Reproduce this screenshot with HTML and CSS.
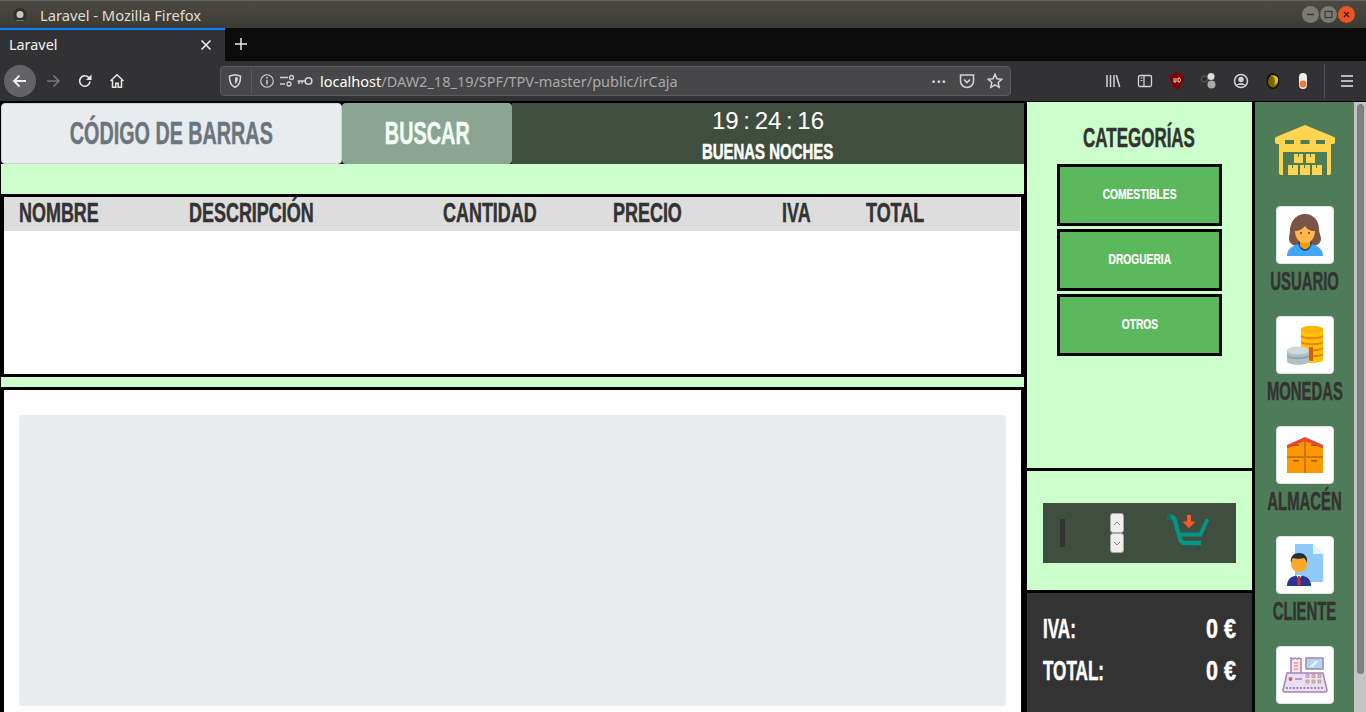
FILE: index.html
```html
<!DOCTYPE html>
<html lang="es">
<head>
  <meta charset="UTF-8" />
  <title>Laravel</title>
  <link rel="stylesheet" href="styles.css">
</head>
<body>
  <div class="titlebar">
    <svg class="app-dot" width="16" height="16" viewBox="0 0 16 16"><circle cx="8" cy="8" r="7" fill="#33322e"/><circle cx="8" cy="7.500" r="3.500" fill="#c9c7c0"/><path d="M4 13h8v1H4z" fill="#77756d"/></svg>
    <span class="title-text">Laravel - Mozilla Firefox</span>
    <div class="win-btns">
      <span class="win-btn"><svg width="17" height="17" viewBox="0 0 17 17"><path d="M5 8.500h7" stroke="#3a3934" stroke-width="1.500"/></svg></span>
      <span class="win-btn"><svg width="17" height="17" viewBox="0 0 17 17"><rect x="5" y="5.500" width="7" height="6" fill="none" stroke="#3a3934" stroke-width="1.200"/></svg></span>
      <span class="win-btn close"><svg width="17" height="17" viewBox="0 0 17 17"><path d="M6 6l5 5M11 6l-5 5" stroke="#4a2010" stroke-width="1.400"/></svg></span>
    </div>
  </div>

  <div class="tabbar">
    <div class="tab">
      <span>Laravel</span>
      <svg width="12" height="12" viewBox="0 0 12 12"><path d="M1.500 1.500l9 9M10.500 1.500l-9 9" stroke="#f2f2f2" stroke-width="1.500"/></svg>
    </div>
    <svg class="new-tab" width="14" height="14" viewBox="0 0 14 14"><path d="M7 1v12M1 7h12" stroke="#e8e8e8" stroke-width="1.500"/></svg>
  </div>

  <div class="toolbar">
    <span class="back"><svg width="16" height="16" viewBox="0 0 16 16"><path d="M14 8H2M7.500 2.500L2 8l5.500 5.500" fill="none" stroke="#f2f2f2" stroke-width="1.800"/></svg></span>
    <svg class="tool-fwd" width="16" height="16" viewBox="0 0 16 16"><path d="M2 8h12M8.500 2.500L14 8l-5.500 5.500" fill="none" stroke="#77777a" stroke-width="1.600"/></svg>
    <svg class="tool-reload" width="16" height="16" viewBox="0 0 16 16"><path d="M13 8.500A5.200 5.200 0 1 1 11.500 4.300L14 6.500" fill="none" stroke="#e8e8e8" stroke-width="1.600"/><path d="M14.500 1.500v5.500H9z" fill="#e8e8e8"/></svg>
    <svg class="tool-home" width="16" height="16" viewBox="0 0 16 16"><path d="M1.500 8L8 1.800 14.500 8M3.500 7v7.200h3.300v-4h2.400v4h3.300V7" fill="none" stroke="#e8e8e8" stroke-width="1.500"/></svg>

    <div class="urlbar">
      <svg class="url-shield" width="14" height="14" viewBox="0 0 14 14"><path d="M1.500 2L7 .8 12.500 2c.2 5-1.500 9.500-5.500 11.500C3 11.500 1.300 7 1.500 2z" fill="none" stroke="#d4d4d6" stroke-width="1.500"/><path d="M7 3l3 .7c0 3-1 5-3 6.500z" fill="#d4d4d6"/></svg>
      <span class="url-sep"></span>
      <svg width="16" height="16" viewBox="0 0 16 16"><circle cx="8" cy="8" r="6.300" fill="none" stroke="#d4d4d6" stroke-width="1.100"/><path d="M8 7v4.500" stroke="#d4d4d6" stroke-width="1.400"/><circle cx="8" cy="4.800" r=".9" fill="#d4d4d6"/></svg>
      <svg class="url-perm" width="16" height="16" viewBox="0 0 16 16"><path d="M1 4.500h8M1 11h5" stroke="#d4d4d6" stroke-width="1.600"/><circle cx="12.500" cy="4.500" r="2" fill="none" stroke="#d4d4d6" stroke-width="1.300"/><circle cx="10" cy="11" r="2" fill="none" stroke="#d4d4d6" stroke-width="1.300"/></svg>
      <svg class="url-key" width="16" height="10" viewBox="0 0 16 10"><circle cx="11.500" cy="5" r="3.300" fill="none" stroke="#d4d4d6" stroke-width="1.600"/><path d="M8 5H.500M2 5v3M5 5v2.500" stroke="#d4d4d6" stroke-width="1.500"/></svg>
      <span class="url-text"><b>localhost</b>/DAW2_18_19/SPF/TPV-master/public/irCaja</span>
      <span class="url-dots">•••</span>
      <svg class="url-pocket" width="16" height="16" viewBox="0 0 16 16"><path d="M1.500 2h13v6a6.500 6.500 0 0 1-13 0z" fill="none" stroke="#d4d4d6" stroke-width="1.500"/><path d="M5 6.500l3 3 3-3" fill="none" stroke="#d4d4d6" stroke-width="1.600"/></svg>
      <svg width="16" height="16" viewBox="0 0 16 16"><path d="M8 1.300l2 4.500 4.800.5-3.600 3.200 1 4.800L8 11.900l-4.200 2.400 1-4.800L1.200 6.300 6 5.800z" fill="none" stroke="#d4d4d6" stroke-width="1.500"/></svg>
    </div>

    <div class="tool-right">
      <svg width="16" height="16" viewBox="0 0 16 16"><path d="M2 2v12M5.500 2v12M9 2v12M11.300 2l3.400 12" stroke="#d4d4d6" stroke-width="1.500"/></svg>
      <svg width="16" height="16" viewBox="0 0 16 16"><rect x="1.500" y="2.500" width="13" height="11" rx="1.500" fill="none" stroke="#d4d4d6" stroke-width="1.300"/><path d="M7 2.500v11" stroke="#d4d4d6" stroke-width="1.300"/><path d="M3.500 5h2M3.500 7.500h2" stroke="#d4d4d6"/></svg>
      <svg width="16" height="18" viewBox="0 0 16 18"><path d="M8 .5l7 2.500c.2 6.500-2 11.500-7 14.500C3 14.500.8 9.500 1 3z" fill="#800000"/><path d="M5 6v4h2V6M9 6v4c2 0 2.500-.8 2.500-2S11 6 9 6z" fill="none" stroke="#f4dcdc"/></svg>
      <svg width="16" height="18" viewBox="0 0 16 18"><circle cx="10" cy="4.500" r="3.500" fill="#dcdcdc"/><circle cx="3.500" cy="7" r="3" fill="#2c2c2c" stroke="#999" stroke-width=".5"/><circle cx="10.500" cy="12.500" r="4" fill="#a9a9a9"/></svg>
      <svg width="16" height="16" viewBox="0 0 16 16"><circle cx="8" cy="8" r="6.500" fill="none" stroke="#d4d4d6" stroke-width="1.500"/><circle cx="8" cy="6.500" r="2.700" fill="#d4d4d6"/><path d="M3.500 12c1.500-2.400 7.500-2.400 9 0" fill="#d4d4d6"/></svg>
      <svg width="16" height="18" viewBox="0 0 16 18"><ellipse cx="8" cy="9" rx="6.500" ry="8" fill="#111"/><ellipse cx="8" cy="9.500" rx="5" ry="6" fill="#7a6400"/><path d="M4.500 4c4-1 7 3 4.500 9 4-1 5-5 3.500-7.500C11 3.500 7 2.500 4.500 4z" fill="#e8c400"/></svg>
      <svg width="12" height="18" viewBox="0 0 12 18"><rect x="2" y="1" width="8" height="16" rx="4" fill="#ececec"/><circle cx="6" cy="12" r="3.400" fill="#f0763a"/></svg>
    </div>
    <span class="tool-sep"></span>
    <svg class="tool-menu" width="14" height="14" viewBox="0 0 14 14"><path d="M1 2h12M1 7h12M1 12h12" stroke="#e8e8e8" stroke-width="1.700"/></svg>
  </div>

  <div class="page">
    <div class="main-col">
      <div class="top-row">
        <div class="barcode"><span>CÓDIGO DE BARRAS</span></div>
        <div class="search-btn"><span>BUSCAR</span></div>
        <div class="clock">
          <div class="clock-time">19 : 24 : 16</div>
          <div class="clock-greet"><span>BUENAS NOCHES</span></div>
        </div>
      </div>
      <div class="strip-big"></div>
      <div class="ticket">
        <div class="ticket-head">
          <div><span>NOMBRE</span></div>
          <div><span>DESCRIPCIÓN</span></div>
          <div><span>CANTIDAD</span></div>
          <div><span>PRECIO</span></div>
          <div><span>IVA</span></div>
          <div><span>TOTAL</span></div>
        </div>
      </div>
      <div class="strip-small"></div>
      <div class="products">
        <div class="products-box"></div>
      </div>
    </div>

    <div class="side-col">
      <div class="categories">
        <h2><span>CATEGORÍAS</span></h2>
        <div class="cat-btn"><span>COMESTIBLES</span></div>
        <div class="cat-btn"><span>DROGUERIA</span></div>
        <div class="cat-btn"><span>OTROS</span></div>
      </div>
      <div class="qty-area">
        <div class="qty-panel">
          <span class="qty-input"></span>
          <div class="spinner">
            <span><svg width="8" height="5" viewBox="0 0 8 5"><path d="M1 4l3-3 3 3" fill="none" stroke="#888" stroke-width="1"/></svg></span>
            <span><svg width="8" height="5" viewBox="0 0 8 5"><path d="M1 1l3 3 3-3" fill="none" stroke="#888" stroke-width="1"/></svg></span>
          </div>
          <svg class="cart" width="42" height="38" viewBox="0 0 42 38">
            <path d="M1 3h3.500c1.500 0 2.500 1 3 2.500l5.500 19c.7 2.500 2 4.500 4.500 4.500H34" fill="none" stroke="#009688" stroke-width="4.400"/>
            <path d="M10 20.500h23.500L40.500 5" fill="none" stroke="#009688" stroke-width="4"/>
            <path d="M0 1h4v4.500H0z" fill="#00796b"/>
            <path d="M20 1h4v6.500h4.500L22 14 15.500 7.500H20z" fill="#ff5722"/>
            <circle cx="16" cy="34.500" r="2" fill="#37474f"/><circle cx="31" cy="34.500" r="2" fill="#37474f"/>
          </svg>
        </div>
      </div>
      <div class="totals">
        <div class="total-row"><span class="total-label">IVA:</span><span class="total-value">0 €</span></div>
        <div class="total-row"><span class="total-label">TOTAL:</span><span class="total-value">0 €</span></div>
      </div>
    </div>

    <div class="nav-col">
      <svg class="warehouse" width="60" height="50" viewBox="0 0 60 50">
        <path d="M30 0L59 12c1 .5 1 1 1 2v3c0 1-.5 2-2 2h-2v29c0 1.200-.8 2-2 2h-2V27H8v23H6c-1.200 0-2-.8-2-2V19H2c-1.500 0-2-1-2-2v-3c0-1 0-1.500 1-2z" fill="#ffd54f"/>
        <path d="M10 15h9v4h-9zM25.500 15h9v4h-9zM41 15h9v4h-9z" fill="#4f7c58"/>
        <path d="M19 29h4v3h1v-3h4v9h-9zM31 29h4v3h1v-3h4v9h-9zM13 40h4v3h1v-3h5v10H13zM25 40h4v3h1v-3h5v10H25zM37 40h4v3h1v-3h5v10H37z" fill="#ffd54f"/>
      </svg>

      <div class="nav-item">
        <div class="nav-tile">
          <svg width="36" height="42" viewBox="0 0 36 42">
            <path d="M18 0c9 0 14 7 14 15 0 4 2 7 2 10 0 4-4 7-8 7H10c-4 0-8-3-8-7 0-3 1-6 1-10C4 7 9 0 18 0z" fill="#795548"/>
            <path d="M0 42c0-7 5-10 12-12h12c7 2 12 5 12 12z" fill="#42a5f5"/>
            <path d="M11 28c0 5 4 9 7 9s7-4 7-9z" fill="#01579b"/>
            <path d="M13 27h10v4c0 2-3 4-5 4s-5-2-5-4z" fill="#ff9800"/>
            <path d="M8 17c3 0 8-2 10-5 2 3 5 5 10 5 0 7-4 12-10 12S8 24 8 17z" fill="#ffb74d"/>
            <circle cx="14" cy="19" r="1" fill="#5d4037"/><circle cx="22" cy="19" r="1" fill="#5d4037"/>
          </svg>
        </div>
        <span>USUARIO</span>
      </div>

      <div class="nav-item">
        <div class="nav-tile">
          <svg width="36" height="39" viewBox="0 0 36 39">
            <path d="M14 3c0-4 22-4 22 0v31c0 4-22 4-22 0z" fill="#ffc107"/>
            <ellipse cx="25" cy="3.500" rx="11" ry="3.500" fill="#ffb300"/>
            <path d="M14 9c3 3 19 3 22 0v2c-3 3-19 3-22 0zM14 15c3 3 19 3 22 0v2c-3 3-19 3-22 0zM14 21c3 3 19 3 22 0v2c-3 3-19 3-22 0zM14 27c3 3 19 3 22 0v2c-3 3-19 3-22 0z" fill="#f57c00"/>
            <path d="M22 21h4v14l-4-.5z" fill="#d06000"/>
            <path d="M0 25c0-5 22-5 22 0v10c0 5-22 5-22 0z" fill="#b0bec5"/>
            <ellipse cx="11" cy="24.500" rx="11" ry="4" fill="#cfd8dc"/>
            <path d="M0 29c3 3 19 3 22 0v2c-3 3-19 3-22 0z" fill="#90a4ae"/>
          </svg>
        </div>
        <span>MONEDAS</span>
      </div>

      <div class="nav-item">
        <div class="nav-tile">
          <svg width="36" height="36" viewBox="0 0 36 36">
            <path d="M0 9L18 1l18 8v27H0z" fill="#ff9800"/>
            <path d="M0 8L18 0l18 8v3.500L18 4 0 11.500z" fill="#f44336"/>
            <path d="M17 4h2v32h-2zM0 19h36v2H0z" fill="#c87800"/>
            <path d="M6 7.500h6V9H6zM24 7.500h6V9h-6zM6 23h6v1.500H6zM24 23h6v1.500h-6z" fill="#8d5a00"/>
          </svg>
        </div>
        <span>ALMACÉN</span>
      </div>

      <div class="nav-item">
        <div class="nav-tile">
          <svg width="36" height="42" viewBox="0 0 36 42">
            <path d="M8 0h18l10 10v28H8z" fill="#90caf9"/>
            <path d="M26 0l10 10H26z" fill="#e3f2fd"/>
            <path d="M0 42c0-7 4-10 12-11 8 1 12 4 12 11z" fill="#283593"/>
            <path d="M9 31h6l-3 5z" fill="#fff"/><path d="M11 32h2l1 9h-4z" fill="#d32f2f"/>
            <circle cx="12" cy="20" r="8" fill="#ffa726"/>
            <path d="M4 19c-1-7 3-10 8-10s9 3 8 10c-1-3-2-4-3-5-3 1-9 1-11 0-1 1-1 3-2 5z" fill="#263238"/>
          </svg>
        </div>
        <span>CLIENTE</span>
      </div>

      <div class="nav-item">
        <div class="nav-tile">
          <svg width="46" height="38" viewBox="0 0 46 38">
            <path d="M9 2l2 1 2-1 2 1 2-1 2 1v15H9z" fill="#fbe9e7" stroke="#a283bd" stroke-width="1.500"/>
            <path d="M11.500 7h5M11.500 10h5M11.500 13h5" stroke="#e57373" stroke-width="1.200"/>
            <path d="M24 2h17v11H24z" fill="#b3d4f0" stroke="#a283bd" stroke-width="1.500"/>
            <path d="M27 11l6-6h4l-6 6z" fill="#e3f2fd"/>
            <path d="M5 17h36l4 17c0 1.500-1 2-2 2H3c-1 0-2-.5-2-2z" fill="#e8dff0" stroke="#a283bd" stroke-width="1.500"/>
            <circle cx="8.500" cy="23" r="2" fill="#d35d7a"/>
            <path d="M13 23h7" stroke="#a283bd" stroke-width="1.500"/>
            <path d="M24 18.500h3v3h-3zM30 18.500h3v3h-3zM36 18.500h3v3h-3zM24 24h3v3h-3zM30 24h3v3h-3zM36 24h3v3h-3z" fill="#e6c384" stroke="#a283bd" stroke-width=".6"/>
            <path d="M4 32h38" stroke="#a283bd" stroke-width="2" stroke-dasharray="2 1.500"/>
          </svg>
        </div>
      </div>
    </div>

    <div class="scrollbar"><span class="scroll-thumb"></span></div>
  </div>
</body>
</html>
```

FILE: styles.css
```css
* {
  box-sizing: border-box;
}

html, body {
  margin: 0;
  padding: 0;
  height: 712px;
  overflow: hidden;
}

body {
  font-family: "Noto Sans", "Open Sans", sans-serif;
  background: #000;
  color: #333;
}

svg {
  display: block;
  flex: none;
}

/* window chrome */
.titlebar {
  height: 28px;
  display: flex;
  align-items: center;
  padding: 0 11px 0 12px;
  background: linear-gradient(#4b4943, #3c3b36);
  border-top: 1px solid #66645e;
  color: #e0ddd6;
  font-size: 14.7px;
}

.title-text {
  margin-left: 12px;
}

.win-btns {
  margin-left: auto;
  display: flex;
  gap: 1px;
}

.win-btn {
  width: 17px;
  height: 17px;
  border-radius: 50%;
  background: #7b7a73;
}

.win-btn.close {
  background: #e9541f;
}

.tabbar {
  height: 33px;
  display: flex;
  align-items: center;
  background: #0c0c0d;
}

.tab {
  width: 225px;
  height: 33px;
  display: flex;
  align-items: center;
  justify-content: space-between;
  padding: 0 13px 2px 9px;
  background: #323234;
  border-top: 2px solid #0a84ff;
  color: #f2f2f2;
  font-size: 14.4px;
}

.new-tab {
  margin: 0 0 2px 9px;
}

.toolbar {
  height: 40px;
  display: flex;
  align-items: center;
  background: #323234;
  color: #fff;
}

.back {
  width: 32px;
  height: 32px;
  margin-left: 4px;
  border-radius: 50%;
  background: #636365;
  display: flex;
  align-items: center;
  justify-content: center;
}

.tool-fwd {
  margin-left: 9px;
}

.tool-reload {
  margin-left: 16px;
}

.tool-home {
  margin-left: 16px;
}

.urlbar {
  width: 791px;
  height: 30px;
  margin-left: 95px;
  display: flex;
  align-items: center;
  padding: 0 7px;
  background: #474749;
  border: 1px solid #5c5c5e;
  border-radius: 4px;
}

.url-sep {
  width: 1px;
  height: 24px;
  margin: 0 7px 0 9px;
  background: #5c5c5e;
}

.url-perm {
  margin-left: 4px;
}

.url-key {
  margin-left: 2px;
}

.url-text {
  margin-left: 7px;
  color: #a9a9ab;
  font-size: 14.5px;
  white-space: nowrap;
}

.url-text b {
  color: #fff;
  font-weight: 400;
}

.url-dots {
  margin-left: auto;
  color: #d4d4d6;
  font-size: 11px;
  letter-spacing: 1px;
}

.url-pocket {
  margin: 0 12px;
}

.tool-right {
  display: flex;
  align-items: center;
  gap: 16px;
  margin-left: 94px;
}

.tool-sep {
  width: 1px;
  height: 34px;
  margin-left: 15px;
  background: #56565a;
}

.tool-menu {
  margin-left: 15px;
}

/* page */
.page {
  height: 611px;
  margin-top: 1px;
  display: flex;
  background: #000;
  font-family: "Liberation Sans", sans-serif;
  font-weight: 700;
}

/* no condensed display font is installed, so headings are squeezed */
.page span {
  white-space: nowrap;
}

.barcode span,
.search-btn span,
.clock-greet span,
.ticket-head span,
.categories h2 span,
.cat-btn span,
.total-label,
.total-value,
.nav-item > span {
  display: inline-block;
  -webkit-text-stroke: .5px currentColor;
}

.main-col {
  width: 1023px;
  margin-left: 1px;
  margin-right: 3px;
  padding-top: 1px;
  display: flex;
  flex-direction: column;
}

.top-row {
  height: 61px;
  flex: none;
  display: flex;
}

.barcode {
  width: 341px;
  display: flex;
  align-items: center;
  justify-content: center;
  background: #e9ecef;
  border: 1px solid #ced4da;
  border-radius: 4px;
  color: #6c757d;
  font-size: 31px;
}

.barcode span {
  transform: scaleX(.637);
}

.search-btn {
  width: 170px;
  display: flex;
  align-items: center;
  justify-content: center;
  background: #8ba595;
  border-radius: 4px;
  color: #f4fff4;
  font-size: 31px;
}

.search-btn span {
  transform: scaleX(.64);
}

.clock {
  flex: 1;
  display: flex;
  flex-direction: column;
  align-items: center;
  background: #3f4e3f;
  color: #fff;
}

.clock-time {
  margin-top: 4px;
  font-weight: 400;
  font-size: 24px;
  line-height: 28px;
  word-spacing: -2px;
}

.clock-greet {
  margin-top: 4px;
  font-size: 22px;
  line-height: 26px;
}

.clock-greet span {
  transform: scaleX(.68);
}

.strip-big {
  height: 30px;
  flex: none;
  background: #ccffcc;
}

.ticket {
  height: 177px;
  flex: none;
  margin: 3px 3px 3px 3px;
  padding-right: 1px;
  background: #fff;
}

.ticket-head {
  height: 34px;
  padding: 0 0 2px 15px;
  display: grid;
  grid-template-columns: 170px 254px 170px 169px 84px 1fr;
  align-items: center;
  background: #dddddd;
  color: #333;
  font-size: 27px;
}

.ticket-head span {
  transform: scaleX(.665);
  transform-origin: left center;
}

.strip-small {
  height: 10px;
  flex: none;
  background: #ccffcc;
}

.products {
  flex: 1;
  margin: 3px 3px 0 3px;
  padding: 25px 15px 6px;
  background: #fff;
}

.products-box {
  width: 987px;
  height: 291px;
  background: #e9ecef;
  border-radius: 4px;
}

.side-col {
  width: 225px;
  display: flex;
  flex-direction: column;
  gap: 3px;
}

.categories {
  height: 366px;
  flex: none;
  padding-top: 1px;
  display: flex;
  flex-direction: column;
  align-items: center;
  gap: 3px;
  background: #ccffcc;
}

.categories h2 {
  margin: 19px 0 7px;
  color: #333;
  font-size: 27px;
  line-height: 32px;
}

.categories h2 span {
  transform: scaleX(.628);
}

.cat-btn {
  width: 165px;
  height: 62px;
  padding-bottom: 2px;
  flex: none;
  display: flex;
  align-items: center;
  justify-content: center;
  background: #5cb85c;
  border: 3px solid #000;
  color: #fff;
  font-size: 14px;
}

.cat-btn span {
  transform: scaleX(.73);
  -webkit-text-stroke: .2px currentColor;
}

.qty-area {
  height: 119px;
  flex: none;
  padding: 32px 16px 0;
  background: #ccffcc;
}

.qty-panel {
  height: 60px;
  display: flex;
  align-items: center;
  background: #3f4e3f;
}

.qty-input {
  width: 5px;
  height: 28px;
  margin-left: 17px;
  background: #333;
}

.spinner {
  width: 14px;
  margin-left: 45px;
  display: flex;
  flex-direction: column;
}

.spinner span {
  height: 20px;
  display: flex;
  align-items: center;
  justify-content: center;
  background: #efefef;
  border: 1px solid #a9a9a9;
  border-radius: 3px;
}

.cart {
  margin-left: 43px;
}

.totals {
  flex: 1;
  padding: 15px 16px 0;
  background: #333;
  color: #fff;
}

.total-row {
  height: 42px;
  display: flex;
  align-items: center;
  justify-content: space-between;
  font-size: 28px;
}

.total-label {
  transform: scaleX(.61);
  transform-origin: left center;
}

.total-value {
  transform: scaleX(.77);
  transform-origin: right center;
}

.nav-col {
  width: 99px;
  margin-left: 3px;
  padding-top: 23px;
  display: flex;
  flex-direction: column;
  align-items: center;
  overflow: hidden;
  background: #4f7c58;
}

.warehouse {
  margin-bottom: 31px;
}

.nav-item {
  height: 110px;
  flex: none;
  display: flex;
  flex-direction: column;
  align-items: center;
  color: #333;
  font-size: 25px;
}

.nav-item > span {
  margin-top: 2px;
  line-height: 30px;
  transform: scaleX(.595);
}

.nav-tile {
  width: 58px;
  height: 58px;
  flex: none;
  display: flex;
  align-items: center;
  justify-content: center;
  background: #fff;
  border: 1px solid #dee2e6;
  border-radius: 4px;
}

.scrollbar {
  width: 12px;
  padding: 2px 2px 0 3px;
  background: #c4c4c4;
}

.scroll-thumb {
  display: block;
  width: 7px;
  height: 570px;
  border-radius: 4px;
  background: #7d8082;
}
```
